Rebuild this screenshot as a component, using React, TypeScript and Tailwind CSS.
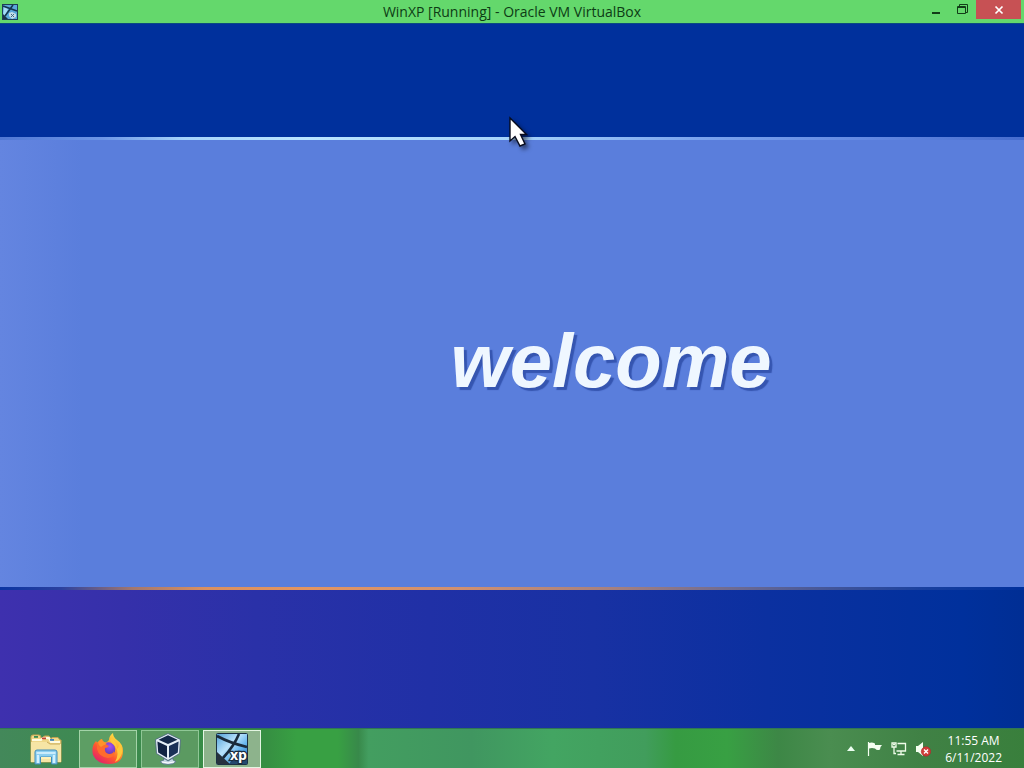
import React from 'react';

function XpIcon({ className }: { className?: string }) {
  return (
    <svg viewBox="0 0 32 32" className={className} aria-hidden="true">
      <defs>
        <linearGradient id="xpSky" x1="0" y1="0" x2="1" y2="1">
          <stop offset="0" stopColor="#4f9fd8" />
          <stop offset="0.4" stopColor="#b9e2fb" />
          <stop offset="0.65" stopColor="#5fb2ee" />
          <stop offset="1" stopColor="#1e5fa8" />
        </linearGradient>
      </defs>
      <rect x="0.5" y="0.5" width="31" height="31" rx="1" fill="url(#xpSky)" stroke="#1b3042" />
      <path d="M1 19 L14 31 H1Z" fill="#26323e" />
      <path d="M1 3 Q14 10 31 14 M23 1 Q18 13 7 25" fill="none" stroke="#1a2b3c" strokeWidth="2.6" />
      <path d="M13 31 L18 24 H31 V31Z" fill="#24496f" />
      <text
        x="14"
        y="27"
        fontFamily="'Open Sans', sans-serif"
        fontWeight="700"
        fontSize="14"
        fill="#fff"
        stroke="#1a2b3c"
        strokeWidth="2.4"
        paintOrder="stroke"
      >
        xp
      </text>
    </svg>
  );
}

function SmallXpIcon() {
  return (
    <svg viewBox="0 0 16 16" className="size-4" aria-hidden="true">
      <rect x="0.5" y="0.5" width="15" height="15" fill="#5ba9db" stroke="#1f4056" />
      <path d="M2 3 L6 5 L4 10 L1 12Z" fill="#a5dcf5" />
      <path d="M1 2 L15 7 M11 1 L3 12" stroke="#14364f" strokeWidth="1.6" />
      <path d="M1 10 L6 15 H1Z" fill="#1d3346" />
      <path d="M7 9 L10 8 L14 10 V13 L10 15 L7 12Z" fill="#c5dfe6" />
      <path d="M9 10 L12 13 M12 10 L9 13" stroke="#3c6b86" />
    </svg>
  );
}

function ExplorerIcon() {
  return (
    <svg viewBox="0 0 34 32" className="h-8 w-[34px]" aria-hidden="true">
      <path d="M2 29 V4 Q2 2 4 2 H10 Q12 2 12 5 H14 Q14 3 16 3 H20 L22 6 Q22 4.500 24 4.500 H29 L31 7 H32 V29Z" fill="#efd789" stroke="#c4a451" />
      <path d="M3 7 H12 L14 5 H20 L22 9 H31" fill="none" stroke="#fffbe0" strokeWidth="2" />
      <path d="M2 9 H18 L21 11 H32 V29 H2Z" fill="#f6e5a5" />
      <path d="M18 9 L21 11 H31" fill="none" stroke="#c9ab5c" />
      <rect x="5" y="3" width="4" height="1.800" fill="#368c51" />
      <rect x="13" y="4.500" width="4" height="1.800" fill="#c44333" />
      <rect x="21" y="6" width="4" height="1.800" fill="#3e83bd" />
      <path d="M6 31 V19 Q6 17 8 17 H26 Q28 17 28 19 V31 H22.500 V24 H11.500 V31Z" fill="#8dcff0" stroke="#438db9" />
      <path d="M7.500 20 H26.500 M9 22 V30 M25 22 V30" stroke="#dff6ff" strokeWidth="1.700" />
      <path d="M12 25 H22" stroke="#fff1b9" strokeWidth="2" />
    </svg>
  );
}

function FirefoxIcon() {
  return (
    <svg viewBox="0 0 32 32" className="size-8" aria-hidden="true">
      <defs>
        <linearGradient id="ffBody" x1="0.85" y1="0.1" x2="0.25" y2="0.95">
          <stop offset="0" stopColor="#ffe14a" />
          <stop offset="0.35" stopColor="#ffa72a" />
          <stop offset="0.65" stopColor="#ff572f" />
          <stop offset="1" stopColor="#e32567" />
        </linearGradient>
        <radialGradient id="ffGlobe" cx="0.6" cy="0.3" r="0.8">
          <stop offset="0" stopColor="#a64ff0" />
          <stop offset="1" stopColor="#4936a9" />
        </radialGradient>
      </defs>
      <path d="M4 8 Q5 10 6 9 Q8 6 10 6 Q10 8 12 9 Q15 10 17 7 Q17 3 21 0 Q21 4 25 7 Q31 11 31 18 Q31 31 17 31 Q5 31 1 22 Q-1 13 4 8Z" fill="url(#ffBody)" />
      <circle cx="16.500" cy="16" r="6.800" fill="url(#ffGlobe)" />
      <path d="M5 11 Q9 8 13 11 Q15 12 17 13 Q16 15 13 15 Q12 20 17 21 Q21 21 22 18 Q24 24 16 25 Q7 24 5 16Z" fill="#ff6b2d" />
      <path d="M20 5 Q25 10 25 16 Q28 13 27 9 Q31 14 30 20 Q28 27 23 29 Q28 20 23 13 Q19 10 18 7Z" fill="#ffc83a" />
      <path d="M10 6 Q10 8 12 9 L15 11 Q11 12 9 14 Q6 12 6 9Z" fill="#ff932b" />
    </svg>
  );
}

function VirtualBoxIcon() {
  return (
    <svg viewBox="0 0 32 32" className="size-8" aria-hidden="true">
      <path d="M10 25 L14 28 L19 25 V27 L22 28.500 Q20 31.500 14 31.500 Q8 31.500 6 28.500 L10 27Z" fill="#c8d8e5" stroke="#567286" strokeWidth="0.8" />
      <path d="M14 0.500 L26.500 6.500 L25.500 20.500 L14 27.500 L2.500 20.500 L1.500 6.500Z" fill="#e5eff7" stroke="#46627a" strokeWidth="0.8" />
      <path d="M14 2.200 L23.500 6.700 L14 11 L4.500 6.700Z" fill="#142849" />
      <path d="M3.400 8.600 L13 13 V24.800 L4.200 19.600Z" fill="#112343" />
      <path d="M24.600 8.600 L15 13 V24.800 L23.800 19.600Z" fill="#1a3157" />
      <path d="M8 29 Q14 31 20 29" fill="none" stroke="#fff" />
    </svg>
  );
}

function Cursor() {
  return (
    <svg
      viewBox="0 0 24 34"
      className="pointer-events-none absolute left-[508px] top-[116px] h-[34px] w-6 drop-shadow-[3px_3px_2px_rgba(0,0,0,0.5)]"
      aria-hidden="true"
    >
      <path d="M2 2 V25 L7 20.500 L12 30 L17 28 L12.500 18.500 H18.500Z" fill="#fff" stroke="#070b1d" strokeWidth="1.400" />
    </svg>
  );
}

function TitleBar() {
  return (
    <header className="grid h-[23px] shrink-0 grid-cols-[1fr_auto_1fr] bg-[#64d86c] text-[#0d3c15]">
      <div className="flex items-center pl-0.5">
        <SmallXpIcon />
      </div>
      <h1 className="text-[14px] leading-6">WinXP [Running] - Oracle VM VirtualBox</h1>
      <div className="flex items-start justify-end pr-[3px]">
        <button type="button" aria-label="Minimize" className="flex h-[19px] w-[26px] items-center justify-center">
          <svg viewBox="0 0 12 12" className="size-3" aria-hidden="true">
            <path d="M2 9 H10" stroke="#123c18" strokeWidth="2" />
          </svg>
        </button>
        <button type="button" aria-label="Restore" className="flex h-[19px] w-[27px] items-center justify-center">
          <svg viewBox="0 0 12 12" className="size-3" fill="none" stroke="#123c18" aria-hidden="true">
            <path d="M2.500 2 V0.500 H10.500 V8.500 H9" />
            <path d="M0.500 2.500 H8.500 V9.500 H0.500Z M0 3.500 H9" />
          </svg>
        </button>
        <button type="button" aria-label="Close" className="flex h-[19px] w-[45px] items-center justify-center bg-[#c75154]">
          <svg viewBox="0 0 10 10" className="size-2.5" aria-hidden="true">
            <path d="M1.500 1.500 L8.500 8.500 M8.500 1.500 L1.500 8.500" stroke="#fff" strokeWidth="1.700" />
          </svg>
        </button>
      </div>
    </header>
  );
}

function GuestScreen() {
  return (
    <main className="flex flex-1 flex-col">
      <div className="h-[114px] border-t border-[#0b4a80] bg-[#00309c]" />
      <div className="h-[3px] bg-[linear-gradient(90deg,#5078d4_0%,#6d96e6_10%,#a5d3fb_18%,#b9e4ff_30%,#a5d3fb_50%,#7ba4ee_68%,#6389e2_85%,#466cce_100%)]" />
      <section className="flex flex-1 items-center bg-[linear-gradient(90deg,#6485e0_0%,#5a7edc_8%)] pb-1.5 pl-[44%]">
        <h2 className="font-['Liberation_Sans',Arial,sans-serif] text-[76px] leading-none font-bold text-[#eff7ff] italic [text-shadow:3px_3px_1px_#3555b0]">
          welcome
        </h2>
      </section>
      <div className="h-[3px] bg-[linear-gradient(90deg,#0b35a2_0%,#2b419f_6%,#a2776f_13%,#d99060_20%,#e39561_30%,#d09070_45%,#a5807f_60%,#6c6a92_72%,#1a419f_90%,#00309c_100%)]" />
      <div className="h-[138px] bg-[linear-gradient(90deg,#3e30ae_0%,#3530aa_12%,#2a31a8_25%,#2030a6_42%,#1831a3_58%,#0b30a0_75%,#00309c_94%,#002e94_100%)]" />
    </main>
  );
}

const tasks = [
  { label: 'File Explorer', icon: <ExplorerIcon />, style: 'border-transparent' },
  { label: 'Firefox', icon: <FirefoxIcon />, style: 'border-[#a3d3a8] bg-[#5d9e64]' },
  { label: 'Oracle VM VirtualBox', icon: <VirtualBoxIcon />, style: 'border-[#8fc796] bg-[#5b9a61]' },
  { label: 'WinXP', icon: <XpIcon className="size-8" />, style: 'border-[#e3f5e2] bg-[#8db38c]' },
];

function Taskbar() {
  return (
    <footer className="flex h-10 shrink-0 items-center justify-between border-t border-[#2f7755] bg-[linear-gradient(90deg,#43885a_0%,#388b48_18%,#368f42_26%,#38a043_29%,#38a043_33%,#38894a_35%,#439e60_36%,#409660_46%,#43a562_54%,#419d5c_63%,#369b42_66%,#38a043_71%,#3d8746_76%,#4a8d50_81%,#408145_90%,#397f3c_100%)] pl-[17px]">
      <nav aria-label="Open windows" className="flex gap-1">
        {tasks.map((task) => (
          <button
            key={task.label}
            type="button"
            aria-label={task.label}
            className={`flex h-[38px] w-[58px] items-center justify-center border ${task.style}`}
          >
            {task.icon}
          </button>
        ))}
      </nav>
      <div className="flex items-center pr-[22px] text-white">
        <button type="button" aria-label="Show hidden icons" className="mr-3 flex h-6 w-2 items-center">
          <svg viewBox="0 0 8 5" className="h-[5px] w-2" aria-hidden="true">
            <path d="M0 5 L4 0 L8 5Z" fill="#edfff2" />
          </svg>
        </button>
        <button type="button" aria-label="Action Center" className="mr-2">
          <svg viewBox="0 0 16 16" className="size-4" aria-hidden="true">
            <path d="M1.500 1 V15" stroke="#f5fff2" strokeWidth="1.200" />
            <path d="M2 2 Q5 1 8 2.500 V4 H15 L13.500 6 L13 8.500 Q10 10 8 7.500 Q5 6.500 2 7.500Z" fill="#f5fff2" />
          </svg>
        </button>
        <button type="button" aria-label="Network" className="mr-2">
          <svg viewBox="0 0 16 16" className="size-4" fill="none" stroke="#effce9" strokeWidth="1.300" aria-hidden="true">
            <path d="M6.500 2.500 H14.500 V10 H5.500 M10 10 V13.500 M6.500 13.500 H13.500" />
            <path d="M1 2 H5 V6 H1Z M3 6 V12.500 H5" />
            <path d="M2 3.500 H4" />
          </svg>
        </button>
        <button type="button" aria-label="Volume muted" className="mr-3.5">
          <svg viewBox="0 0 16 16" className="size-4" aria-hidden="true">
            <path d="M1 5 H3 L8 1 V15 L3 11 H1Z" fill="#f4ffef" />
            <circle cx="11" cy="10.500" r="4.700" fill="#cf3b38" stroke="#ac282b" strokeWidth="0.600" />
            <path d="M9 8.500 L13 12.500 M13 8.500 L9 12.500" stroke="#fff" strokeWidth="1.400" />
          </svg>
        </button>
        <div className="flex flex-col items-center text-[12px] leading-[17px]">
          <time>11:55 AM</time>
          <time dateTime="2022-06-11">6/11/2022</time>
        </div>
      </div>
    </footer>
  );
}

export default function App() {
  return (
    <div className="relative flex min-h-screen flex-col overflow-hidden font-['Open_Sans','Noto_Sans',sans-serif]">
      <TitleBar />
      <GuestScreen />
      <Taskbar />
      <Cursor />
    </div>
  );
}
